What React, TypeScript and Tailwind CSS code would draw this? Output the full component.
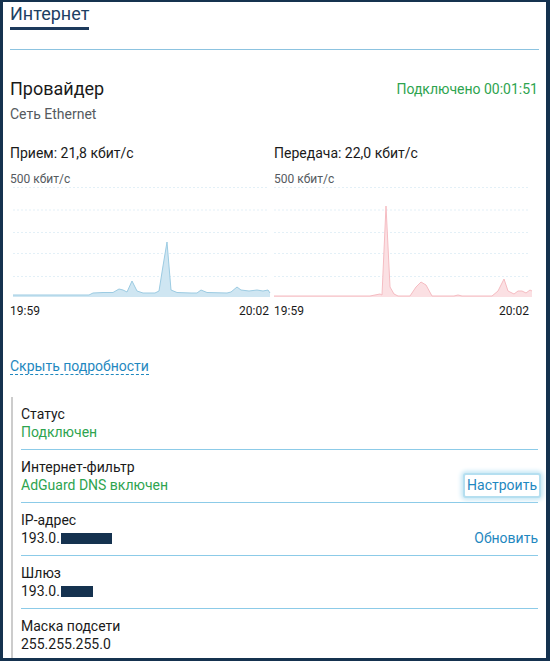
import React from 'react';

type Pt = [number, number];

const rx: Pt[] = [
  [0, 108], [76, 108], [80, 106], [90, 105.5], [100, 105.5], [106, 102], [110, 103],
  [114, 105], [119, 94], [124, 104], [130, 106], [142, 106], [146, 104], [150, 79],
  [154, 55], [158, 103], [164, 105.5], [178, 106], [184, 106], [188, 103], [194, 105.5],
  [214, 106], [218, 105], [224, 100], [228, 103], [236, 104], [244, 103], [250, 104], [255, 103], [257, 106],
];

const tx: Pt[] = [
  [0, 109], [96, 109], [106, 107], [108, 108], [112, 19], [116, 100], [120, 107], [124, 109],
  [136, 109], [142, 100], [147, 95], [152, 98], [158, 109], [180, 109], [184, 108], [188, 109],
  [218, 109], [224, 104], [230, 92], [234, 104], [240, 107], [244, 104], [248, 104], [252, 106], [256, 103], [258, 104],
];

const Chart: React.FC<{ pts: Pt[]; stroke: string; fill: string }> = ({ pts, stroke, fill }) => {
  const line = pts.map((p, i) => `${i ? 'L' : 'M'}${p[0]} ${p[1]}`).join(' ');
  const area = `${line} L${pts[pts.length - 1][0]} 110 L0 110 Z`;
  return (
    <svg width="258" height="111" viewBox="0 0 258 111" className="block">
      {[0, 22.5, 45, 66, 89].map((y) => (
        <line key={y} x1="0" x2="256" y1={y + 0.5} y2={y + 0.5} stroke="#e3f0f7" strokeDasharray="2 2" />
      ))}
      <path d={area} fill={fill} />
      <path d={line} fill="none" stroke={stroke} strokeWidth="1" />
    </svg>
  );
};

const Row: React.FC<{ label: string; children: React.ReactNode; last?: boolean }> = ({ label, children, last }) => (
  <div className={`pt-[8px] h-[53px] ${last ? '' : 'border-b border-[#8ccbe8]'}`}>
    <div className="text-[14px] leading-[18px] text-[#1a1a1a]">{label}</div>
    {children}
  </div>
);

const App: React.FC = () => {
  return (
    <div
      className="w-[550px] h-[661px] bg-white border-l-[3px] border-t-2 border-r-4 border-b-[3px] border-[#15324f] pl-[7px] pr-[8px] overflow-hidden"
      style={{ fontFamily: 'Roboto, "Noto Sans", sans-serif' }}
    >
      <div className="pt-[1px]">
        <span className="inline-block text-[18px] leading-[22px] text-[#1d4063] border-b-[3px] border-[#1d3a5c] pb-[2px]">Интернет</span>
      </div>
      <div className="mt-[19px] border-t border-[#8cc3e0] mr-[-1px]" />

      <div className="mt-[28px] flex justify-between items-start">
        <div>
          <div className="text-[18px] leading-[22px] text-[#1a1a1a]">Провайдер</div>
          <div className="mt-[6px] text-[14px] leading-[17px] text-[#555a60]">Сеть Ethernet</div>
        </div>
        <div className="mt-[3px] text-[14px] leading-[17px] text-[#2ea44f]">Подключено 00:01:51</div>
      </div>

      <div className="mt-[22px] flex">
        <div className="w-[265px]">
          <div className="text-[14px] leading-[17px] text-[#1a1a1a]">Прием: 21,8 кбит/с</div>
          <div className="mt-[10px] text-[12px] leading-[14px] text-[#555a60]">500 кбит/с</div>
          <div className="mt-[1px] pl-[3px]">
            <Chart pts={rx} stroke="#9ccbe2" fill="#cfe6f2" />
          </div>
          <div className="mt-[6px] w-[259px] flex justify-between text-[12px] leading-[14px] text-[#1a1a1a]">
            <span>19:59</span>
            <span>20:02</span>
          </div>
        </div>
        <div className="w-[265px]">
          <div className="text-[14px] leading-[17px] text-[#1a1a1a]">Передача: 22,0 кбит/с</div>
          <div className="mt-[10px] text-[12px] leading-[14px] text-[#555a60]">500 кбит/с</div>
          <div className="mt-[1px]">
            <Chart pts={tx} stroke="#f5bcc2" fill="#fbe0e3" />
          </div>
          <div className="mt-[6px] w-[255px] flex justify-between text-[12px] leading-[14px] text-[#1a1a1a]">
            <span>19:59</span>
            <span>20:02</span>
          </div>
        </div>
      </div>

      <div className="mt-[36px]">
        <span className="text-[14px] leading-[17px] text-[#1f88c0] border-b border-dashed border-[#1f88c0]">Скрыть подробности</span>
      </div>

      <div className="mt-[19px] ml-[1px] border-l-2 border-[#cccccc] pl-[8px]">
        <Row label="Статус">
          <div className="text-[14px] leading-[18px] text-[#2ea44f]">Подключен</div>
        </Row>
        <Row label="Интернет-фильтр">
          <div className="flex justify-between items-center h-[18px]">
            <div className="text-[14px] leading-[18px] text-[#2ea44f]">AdGuard DNS включен</div>
            <button className="mr-[-3px] px-[2px] py-[2px] text-[14px] leading-[17px] text-[#1f88c0] border-2 border-[#b5dff0] rounded-[3px] shadow-[0_0_4px_2px_#c6e7f5] bg-white">Настроить</button>
          </div>
        </Row>
        <Row label="IP-адрес">
          <div className="flex justify-between items-center">
            <div className="flex items-center text-[14px] leading-[18px] text-[#1a1a1a]">
              193.0.<span className="inline-block w-[51px] h-[11px] bg-[#15324f] ml-[1px]" />
            </div>
            <div className="text-[14px] leading-[18px] text-[#1f88c0]">Обновить</div>
          </div>
        </Row>
        <Row label="Шлюз">
          <div className="flex items-center text-[14px] leading-[18px] text-[#1a1a1a]">
            193.0.<span className="inline-block w-[32px] h-[11px] bg-[#15324f] ml-[1px]" />
          </div>
        </Row>
        <Row label="Маска подсети" last>
          <div className="text-[14px] leading-[18px] text-[#1a1a1a]">255.255.255.0</div>
        </Row>
      </div>
    </div>
  );
};

export default App;
